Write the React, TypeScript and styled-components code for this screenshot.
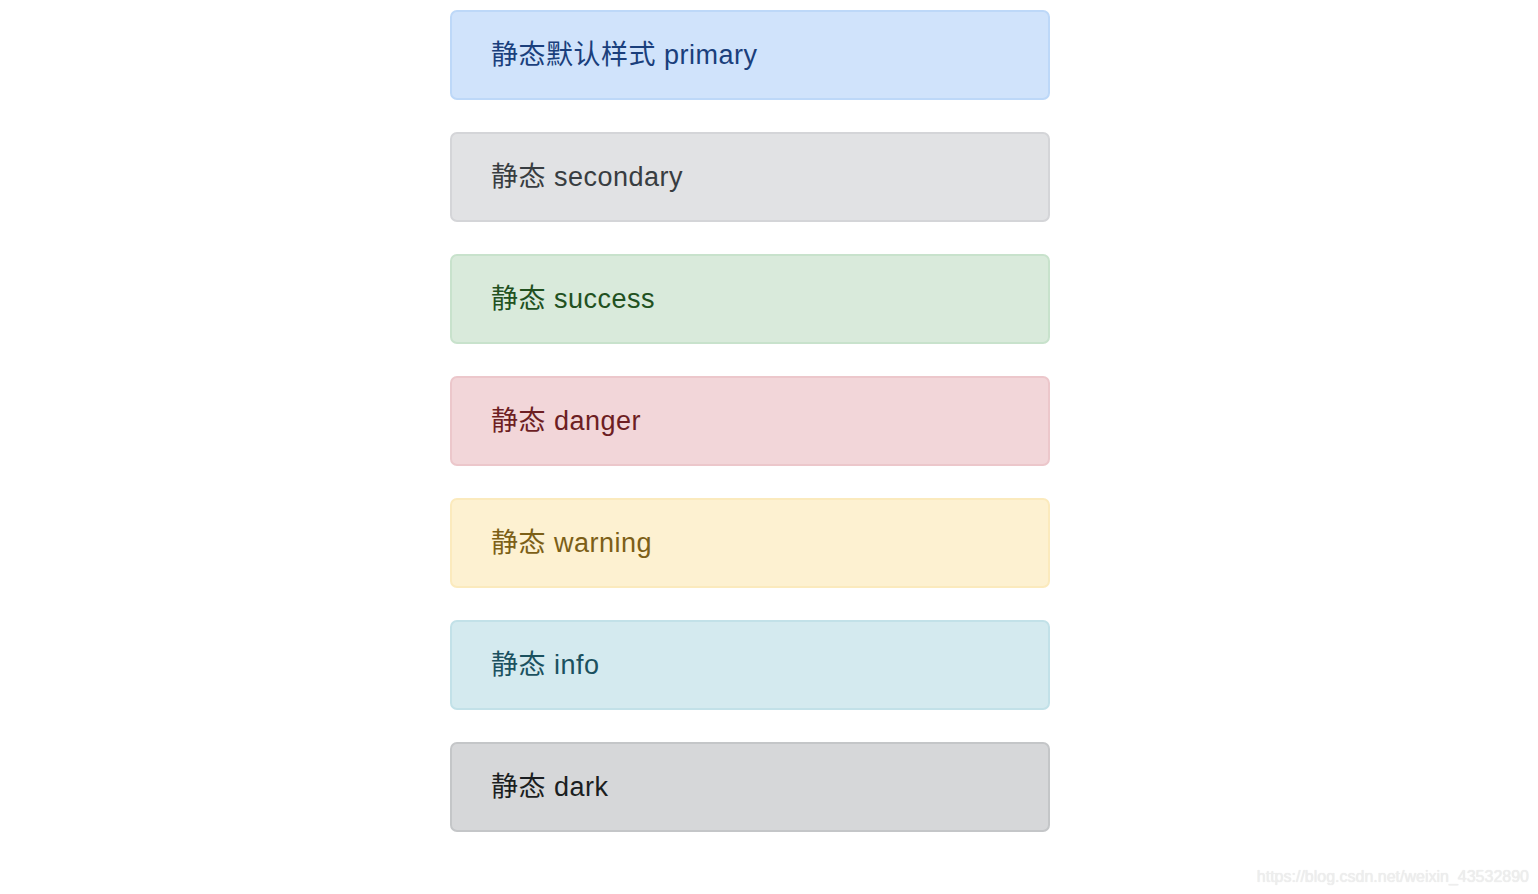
import styled, { createGlobalStyle } from 'styled-components';

const GlobalStyle = createGlobalStyle`
  html, body {
    margin: 0;
    padding: 0;
    background: #ffffff;
  }
  body {
    font-family: 'Liberation Sans', 'Noto Sans CJK SC', Arial, sans-serif;
    height: 894px;
    overflow: hidden;
  }
`;

interface Variant {
  bg: string;
  border: string;
  color: string;
}

const variants: Record<string, Variant> = {
  primary: { bg: '#d0e3fb', border: '#bdd8f8', color: '#1a3f7c' },
  secondary: { bg: '#e1e2e4', border: '#d4d5d8', color: '#383d41' },
  success: { bg: '#d9eadb', border: '#c8e2cc', color: '#22511f' },
  danger: { bg: '#f2d6d9', border: '#ecc7cb', color: '#6d1e23' },
  warning: { bg: '#fdf1d1', border: '#fbeabd', color: '#7c5f17' },
  info: { bg: '#d4eaef', border: '#c2e1e8', color: '#1b515f' },
  dark: { bg: '#d6d7d9', border: '#c4c6c8', color: '#1b1e21' }
};

const Page = styled.div`
  position: relative;
  height: 894px;
`;

const List = styled.div`
  display: flex;
  flex-direction: column;
  gap: 32px;
  width: 600px;
  margin-left: 450px;
  padding-top: 10px;
`;

const Alert = styled.div<{ $kind: string }>`
  display: flex;
  align-items: center;
  box-sizing: border-box;
  height: 90px;
  padding: 0 40px 0 39px;
  border: 2px solid ${({ $kind }) => variants[$kind].border};
  border-radius: 7px;
  background: ${({ $kind }) => variants[$kind].bg};
  color: ${({ $kind }) => variants[$kind].color};
  font-size: 27px;
  line-height: 1;
  letter-spacing: 0.5px;
`;

const Watermark = styled.div`
  position: absolute;
  right: 9px;
  bottom: 8px;
  font-family: 'Liberation Sans', Arial, sans-serif;
  font-size: 16px;
  color: #eeeeee;
  text-shadow: 0 0 1px rgba(0, 0, 0, 0.12);
`;

const items: { kind: string; label: string }[] = [
  { kind: 'primary', label: '静态默认样式 primary' },
  { kind: 'secondary', label: '静态 secondary' },
  { kind: 'success', label: '静态 success' },
  { kind: 'danger', label: '静态 danger' },
  { kind: 'warning', label: '静态 warning' },
  { kind: 'info', label: '静态 info' },
  { kind: 'dark', label: '静态 dark' }
];

const App = () => (
  <Page>
    <GlobalStyle />
    <List>
      {items.map((item) => (
        <Alert key={item.kind} $kind={item.kind}>
          {item.label}
        </Alert>
      ))}
    </List>
    <Watermark>https://blog.csdn.net/weixin_43532890</Watermark>
  </Page>
);

export default App;
